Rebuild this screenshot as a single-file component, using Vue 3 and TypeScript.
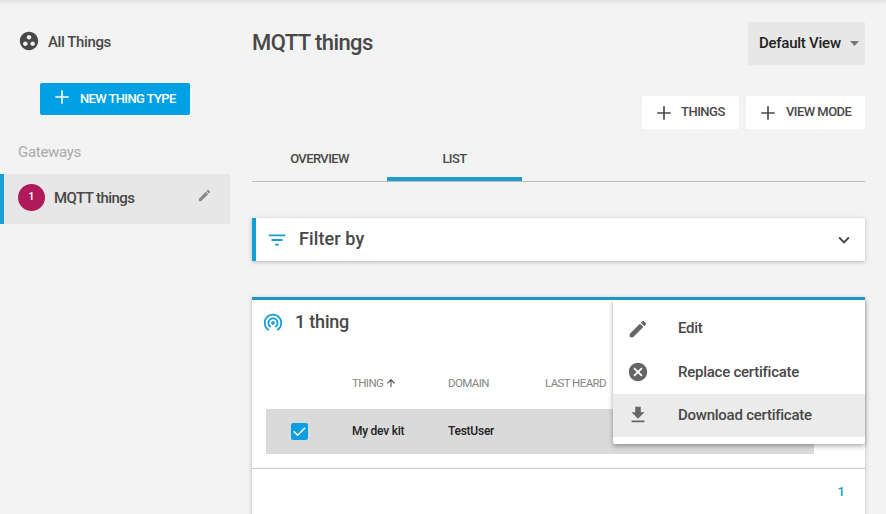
<script setup lang="ts">
import { ref } from 'vue'

interface MenuItem {
  label: string
  icon: string
}

const icons = {
  group:
    'M12 2C6.48 2 2 6.48 2 12s4.48 10 10 10 10-4.48 10-10S17.52 2 12 2zM8 17.5c-1.38 0-2.5-1.12-2.5-2.5s1.12-2.5 2.5-2.5 2.5 1.12 2.5 2.5-1.12 2.5-2.5 2.5zM9.5 8c0-1.38 1.12-2.5 2.5-2.5s2.5 1.12 2.5 2.5-1.12 2.5-2.5 2.5S9.5 9.38 9.5 8zm6.5 9.5c-1.38 0-2.5-1.12-2.5-2.5s1.12-2.5 2.5-2.5 2.5 1.12 2.5 2.5-1.12 2.5-2.5 2.5z',
  plus: 'M20 13h-7v7h-2v-7H4v-2h7V4h2v7h7z',
  edit: 'M3 17.46v3.04c0 .28.22.5.5.5h3.04c.13 0 .26-.05.35-.15L17.81 9.94l-3.75-3.75L3.15 17.1c-.1.1-.15.22-.15.36zM20.71 7.04c.39-.39.39-1.02 0-1.41l-2.34-2.34c-.39-.39-1.02-.39-1.41 0l-1.83 1.83 3.75 3.75 1.83-1.83z',
  cancel:
    'M12 2C6.47 2 2 6.47 2 12s4.47 10 10 10 10-4.47 10-10S17.53 2 12 2zm5 13.59L15.59 17 12 13.41 8.41 17 7 15.59 10.59 12 7 8.41 8.41 7 12 10.59 15.59 7 17 8.41 13.41 12 17 15.59z',
  download: 'M19 9h-4V3H9v6H5l7 7 7-7zM5 18v2h14v-2H5z',
  filter: 'M10 18h4v-2h-4v2zM3 6v2h18V6H3zm3 7h12v-2H6v2z',
  chevron: 'M16.59 8.59L12 13.17 7.41 8.59 6 10l6 6 6-6z',
  tether:
    'M12 11c-1.1 0-2 .9-2 2s.9 2 2 2 2-.9 2-2-.9-2-2-2zm6 2c0-3.31-2.69-6-6-6s-6 2.69-6 6c0 2.22 1.21 4.15 3 5.19l1-1.74c-1.19-.7-2-1.97-2-3.45 0-2.21 1.79-4 4-4s4 1.79 4 4c0 1.48-.81 2.75-2 3.45l1 1.74c1.79-1.04 3-2.97 3-5.19zM12 3C6.48 3 2 7.48 2 13c0 3.7 2.01 6.92 4.99 8.65l1-1.73C5.61 18.53 4 15.96 4 13c0-4.42 3.58-8 8-8s8 3.58 8 8c0 2.96-1.61 5.53-4 6.92l1 1.73c2.99-1.73 5-4.95 5-8.65 0-5.52-4.48-10-10-10z',
  arrowUp: 'M4 12l1.41 1.41L11 7.83V20h2V7.83l5.58 5.59L20 12l-8-8-8 8z',
}

const tabs = ['Overview', 'List']
const activeTab = ref('List')

const menu: MenuItem[] = [
  { label: 'Edit', icon: icons.edit },
  { label: 'Replace certificate', icon: icons.cancel },
  { label: 'Download certificate', icon: icons.download },
]
const hovered = ref(2)
const checked = ref(true)
</script>

<template>
  <div class="shell">
    <aside class="sidebar">
      <a class="all-things">
        <svg class="icon" viewBox="0 0 24 24"><path :d="icons.group" /></svg>
        <span>All Things</span>
      </a>
      <button class="btn primary">
        <svg class="plus" viewBox="0 0 24 24"><path :d="icons.plus" /></svg>
        <span>New thing type</span>
      </button>
      <h3 class="group-title"><span>Gateways</span></h3>
      <a class="nav-item">
        <span class="count">1</span>
        <span class="nav-label">MQTT things</span>
        <svg class="nav-edit" viewBox="0 0 24 24"><path :d="icons.edit" /></svg>
      </a>
    </aside>

    <main class="main">
      <header class="head">
        <h1><span>MQTT things</span></h1>
        <button class="select">
          <span>Default View</span>
          <i class="caret"></i>
        </button>
      </header>

      <div class="actions">
        <button class="btn things">
          <svg class="plus" viewBox="0 0 24 24"><path :d="icons.plus" /></svg>
          <span>Things</span>
        </button>
        <button class="btn mode">
          <svg class="plus" viewBox="0 0 24 24"><path :d="icons.plus" /></svg>
          <span>View mode</span>
        </button>
      </div>

      <nav class="tabs">
        <button
          v-for="t in tabs"
          :key="t"
          class="tab"
          :class="{ active: t === activeTab }"
          @click="activeTab = t"
        >
          <span>{{ t }}</span>
        </button>
      </nav>

      <section class="filter">
        <svg class="icon blue" viewBox="0 0 24 24"><path :d="icons.filter" /></svg>
        <h2><span>Filter by</span></h2>
        <svg class="icon chev" viewBox="0 0 24 24"><path :d="icons.chevron" /></svg>
      </section>

      <section class="panel">
        <div class="panel-head">
          <svg class="icon blue" viewBox="0 0 24 24"><path :d="icons.tether" /></svg>
          <h2><span>1 thing</span></h2>
        </div>
        <div class="grid grid-head">
          <span></span>
          <span class="th sorted">
            <span>Thing</span>
            <svg viewBox="0 0 24 24"><path :d="icons.arrowUp" /></svg>
          </span>
          <span class="th">Domain</span>
          <span class="th">Last heard</span>
        </div>
        <div class="grid grid-row">
          <span class="check" :class="{ on: checked }" @click="checked = !checked">
            <svg v-if="checked" viewBox="0 0 17 17"><path d="M2.7 8.4l4 3.9 7.4-7.6" /></svg>
          </span>
          <span class="td">My dev kit</span>
          <span class="td">TestUser</span>
        </div>
        <footer class="pager"><span>1</span></footer>

        <ul class="menu">
          <li
            v-for="(m, i) in menu"
            :key="m.label"
            :class="{ hover: i === hovered }"
            @mouseenter="hovered = i"
          >
            <svg class="icon" viewBox="0 0 24 24"><path :d="m.icon" /></svg>
            <span>{{ m.label }}</span>
          </li>
        </ul>
      </section>
    </main>
  </div>
</template>

<style>
body {
  margin: 0;
  overflow: hidden;
}
</style>

<style scoped>
.shell {
  display: flex;
  gap: 22px;
  width: 886px;
  height: 514px;
  box-sizing: border-box;
  padding-right: 21px;
  overflow: hidden;
  background: linear-gradient(#e2e2e2, #f3f3f3 5px);
  color: #484848;
  font-family: Roboto, 'Liberation Sans', sans-serif;
  font-weight: 500;
}
h1,
h2,
h3,
ul {
  margin: 0;
  padding: 0;
  font-weight: inherit;
  list-style: none;
}
button {
  border: 0;
  padding: 0;
  font: inherit;
  color: inherit;
  background: none;
}
span {
  white-space: nowrap;
}
svg {
  display: block;
  flex: none;
  fill: currentColor;
}
.icon {
  width: 22px;
  height: 22px;
}
.sidebar {
  display: flex;
  flex-direction: column;
  width: 230px;
  flex: none;
}
.all-things {
  display: flex;
  align-items: center;
  gap: 8px;
  height: 22px;
  margin: 30px 0 0 18px;
  font-size: 15px;
  letter-spacing: -0.4px;
}
.all-things span {
  padding-top: 2px;
}
.btn {
  display: flex;
  align-items: center;
  border-radius: 2px;
  box-sizing: border-box;
  background: #fff;
  font-size: 13px;
  text-transform: uppercase;
  letter-spacing: -0.55px;
}
.btn span {
  padding-bottom: 2px;
}
.plus {
  width: 20px;
  height: 20px;
}
.btn.primary {
  width: 150px;
  height: 32px;
  margin: 31px 0 0 40px;
  padding-left: 12px;
  gap: 8px;
  background: #00a1e4;
  color: #fff;
  letter-spacing: -0.62px;
}
.primary .plus {
  margin-top: -4px;
}
.group-title {
  height: 20px;
  line-height: 20px;
  margin: 27px 0 0 18px;
  font-size: 15px;
  font-weight: 400;
  color: #aaa;
  letter-spacing: -0.3px;
}
.nav-item {
  display: flex;
  align-items: center;
  height: 50px;
  margin-top: 12px;
  box-sizing: border-box;
  border-left: 4px solid #1a9fd6;
  padding: 0 18px 3px 14px;
  background: #e7e7e7;
}
.count {
  width: 27px;
  height: 27px;
  border-radius: 50%;
  background: #b01a5b;
  color: #fff;
  font-size: 11px;
  line-height: 26px;
  text-align: center;
}
.nav-label {
  margin-left: 9px;
  padding-top: 1px;
  font-size: 15px;
  letter-spacing: -0.57px;
}
.nav-edit {
  width: 15px;
  height: 15px;
  margin: 0 0 4px auto;
  color: #8a8a8a;
}
.main {
  display: flex;
  flex-direction: column;
  width: 613px;
}
.head {
  display: flex;
  justify-content: space-between;
  height: 65px;
  box-sizing: border-box;
  padding-top: 22px;
}
h1 {
  font-size: 22px;
  line-height: 42px;
  letter-spacing: -0.58px;
}
.select {
  display: flex;
  align-items: center;
  justify-content: space-between;
  width: 117px;
  height: 43px;
  padding: 0 6px 0 11px;
  background: #e7e7e7;
  color: #222;
  font-size: 15px;
  letter-spacing: -0.25px;
}
.select span {
  padding-bottom: 2px;
}
.caret {
  width: 9px;
  height: 5px;
  background: #777;
  clip-path: polygon(0 0, 100% 0, 50% 100%);
}
.actions {
  display: flex;
  justify-content: flex-end;
  gap: 7px;
  margin-top: 31px;
}
.actions .btn {
  height: 33px;
  padding-left: 12px;
  gap: 8px;
}
.actions .things {
  width: 97px;
  gap: 7px;
  letter-spacing: -0.5px;
}
.mode {
  width: 119px;
}
.tabs {
  display: flex;
  height: 53px;
  box-sizing: border-box;
  border-bottom: 1px solid #bdbdbd;
}
.tab {
  width: 135px;
  height: 52px;
  padding-top: 11px;
  box-sizing: border-box;
  border-bottom: 4px solid transparent;
  font-size: 13px;
  text-transform: uppercase;
  letter-spacing: -0.6px;
}
.tab.active {
  border-color: #1f9bcc;
}
.filter {
  display: flex;
  align-items: center;
  height: 43px;
  flex: none;
  margin-top: 36px;
  box-sizing: border-box;
  border-left: 4px solid #159fd4;
  padding: 0 10px;
  background: #fff;
  box-shadow: 0 1px 4px rgba(0, 0, 0, 0.26);
}
h2 {
  padding-bottom: 2px;
  font-size: 18px;
}
.filter h2 {
  margin-left: 11px;
  letter-spacing: 0.1px;
}
.panel-head h2 {
  letter-spacing: -0.2px;
}
.blue {
  color: #159fd4;
}
.chev {
  margin-left: auto;
}
.panel {
  position: relative;
  height: 230px;
  flex: none;
  margin-top: 36px;
  box-sizing: border-box;
  border-top: 3px solid #1f96c0;
  background: #fff;
  box-shadow: 0 1px 4px rgba(0, 0, 0, 0.26);
}
.panel-head {
  display: flex;
  align-items: center;
  gap: 11px;
  height: 44px;
  padding-left: 10px;
}
.grid {
  display: grid;
  grid-template-columns: 86px 96px 97px 1fr;
  align-items: center;
  width: 548px;
  margin-left: 14px;
}
.grid-head {
  height: 65px;
  padding-top: 13px;
  box-sizing: border-box;
}
.th {
  color: #858585;
  font-size: 11.5px;
  font-weight: 400;
  letter-spacing: -0.6px;
  text-transform: uppercase;
}
.sorted {
  display: flex;
  align-items: center;
  gap: 2px;
}
.sorted svg {
  width: 12px;
  height: 12px;
  color: #444;
}
.grid-row {
  height: 45px;
  background: #dadada;
  color: #222;
  font-size: 12px;
  letter-spacing: -0.25px;
}
.td {
  padding-bottom: 2px;
}
.check {
  width: 17px;
  height: 17px;
  margin-left: 24.5px;
  border-radius: 2px;
  background: #fff;
}
.check.on {
  background: #0b9fe0;
}
.check path {
  fill: none;
  stroke: #fff;
  stroke-width: 1.5;
}
.pager {
  display: flex;
  justify-content: flex-end;
  margin-top: 14px;
  border-top: 1px solid #c8c8c8;
  padding: 15px 20px 0 0;
  color: #159fc4;
  font-size: 13px;
}
.menu {
  position: absolute;
  top: 0;
  right: 0;
  width: 252px;
  height: 144px;
  box-sizing: border-box;
  padding-top: 7px;
  border-radius: 0 0 2px 2px;
  background: #fff;
  box-shadow: 0 2px 5px rgba(0, 0, 0, 0.35);
  clip-path: inset(0 -8px -8px -8px);
}
.menu li {
  display: flex;
  align-items: center;
  gap: 29px;
  height: 43.3px;
  padding-left: 14px;
  font-size: 15px;
  letter-spacing: -0.25px;
}
.menu li:first-child span {
  padding-bottom: 2px;
}
.menu .icon {
  color: #666;
}
.menu li.hover {
  background: #ebebeb;
}
</style>
